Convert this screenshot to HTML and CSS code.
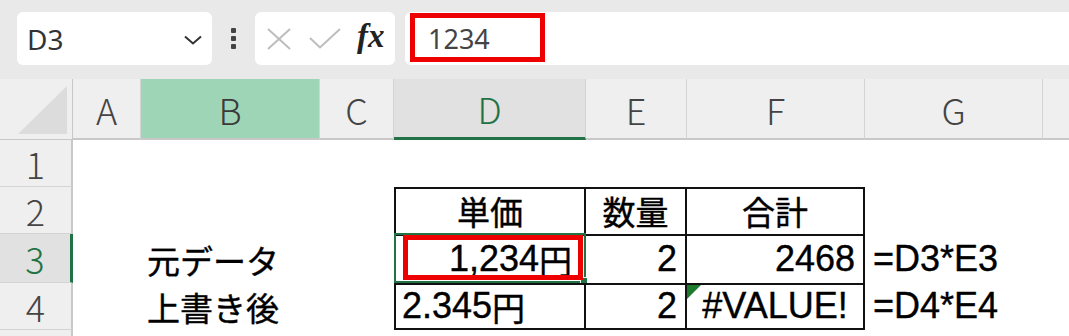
FILE: index.html
```html
<!DOCTYPE html>
<html lang="ja">
<head>
  <meta charset="UTF-8">
  <meta name="viewport" content="width=device-width, initial-scale=1.0">
  <title>Excel - 上書き</title>
  <link rel="stylesheet" href="styles.css">
</head>
<body>
  <div class="toolbar">
    <div class="name-box">
      <span class="name-text">D3</span>
      <svg class="chevron" width="20" height="10" viewBox="0 0 20 10">
        <polyline points="2,1.5 10,8.5 18,1.5" fill="none" stroke="#333" stroke-width="2"/>
      </svg>
    </div>
    <div class="grip"><i></i><i></i><i></i></div>
    <div class="fx-box">
      <svg class="icon-x" width="24" height="22" viewBox="0 0 24 22">
        <line x1="1" y1="1" x2="23" y2="21" stroke="#bdbdbd" stroke-width="2"/>
        <line x1="23" y1="1" x2="1" y2="21" stroke="#bdbdbd" stroke-width="2"/>
      </svg>
      <svg class="icon-check" width="32" height="21" viewBox="0 0 32 21">
        <polyline points="1,10 11,19.5 31,1" fill="none" stroke="#bdbdbd" stroke-width="2"/>
      </svg>
      <span class="fx">fx</span>
    </div>
    <div class="formula">
      <span class="formula-text">1234</span>
      <div class="mark mark-formula"></div>
    </div>
  </div>

  <div class="sheet">
    <!-- column headers -->
    <div class="corner">
      <svg width="49" height="48" viewBox="0 0 49 48"><polygon points="49,0 49,48 0,48" fill="#dcdcdc"/></svg>
    </div>
    <div class="ch">A</div>
    <div class="ch ch-sel">B</div>
    <div class="ch">C</div>
    <div class="ch ch-active">D</div>
    <div class="ch">E</div>
    <div class="ch">F</div>
    <div class="ch">G</div>
    <div class="ch ch-last"></div>

    <!-- row 1 -->
    <div class="rh">1</div>
    <div class="c span-8"></div>

    <!-- row 2 -->
    <div class="rh">2</div>
    <div class="c span-3"></div>
    <div class="c t t-first center"><span class="ja">単価</span></div>
    <div class="c t center"><span class="ja">数量</span></div>
    <div class="c t center"><span class="ja">合計</span></div>
    <div class="c span-2"></div>

    <!-- row 3 -->
    <div class="rh rh-active">3</div>
    <div class="c"></div>
    <div class="c"><span class="ja">元データ</span></div>
    <div class="c"></div>
    <div class="c t t-first right selected">
      1,234<span class="ja">円</span>
      <div class="sel-border"><i class="handle"></i></div>
      <div class="mark mark-cell"></div>
    </div>
    <div class="c t right">2</div>
    <div class="c t right">2468</div>
    <div class="c overflow">=D3*E3</div>
    <div class="c"></div>

    <!-- row 4 -->
    <div class="rh">4</div>
    <div class="c"></div>
    <div class="c"><span class="ja">上書き後</span></div>
    <div class="c"></div>
    <div class="c t t-first t-last">2.345<span class="ja">円</span></div>
    <div class="c t t-last right">2</div>
    <div class="c t t-last center error">#VALUE!<i class="flag"></i></div>
    <div class="c overflow">=D4*E4</div>
    <div class="c"></div>

    <!-- row 5 -->
    <div class="rh rh-cut">5</div>
    <div class="c span-8"></div>
  </div>
</body>
</html>
```

FILE: styles.css
```css
body {
  margin: 0;
  width: 1069px;
  height: 336px;
  overflow: hidden;
  background: #fff;
  font-family: "Liberation Sans", "Noto Sans CJK JP", sans-serif;
}

/* formula bar */
.toolbar {
  display: flex;
  align-items: flex-start;
  height: 79px;
  box-sizing: border-box;
  padding: 12px 0 0 17px;
  background: #e9e9e9;
}
.name-box {
  display: flex;
  align-items: center;
  justify-content: space-between;
  width: 195px;
  height: 53px;
  box-sizing: border-box;
  padding: 0 9px 0 10px;
  background: #fff;
  border-radius: 6px;
}
.name-text {
  font-family: "Noto Sans", "Liberation Sans", sans-serif;
  font-size: 28px;
  color: #333;
}
.chevron {
  margin-top: 2px;
}
.grip {
  display: flex;
  flex-direction: column;
  gap: 3px;
  width: 43px;
  height: 53px;
  align-items: center;
  justify-content: center;
}
.grip i {
  display: block;
  width: 5px;
  height: 5px;
  background: #444;
  border-radius: 1px;
}
.fx-box {
  display: flex;
  align-items: center;
  width: 140px;
  height: 53px;
  box-sizing: border-box;
  padding-left: 12px;
  background: #fff;
  border-radius: 6px;
}
.icon-x {
  margin-right: 18px;
}
.icon-check {
  margin-right: 16px;
}
.fx {
  font-family: "Liberation Serif", serif;
  font-style: italic;
  font-weight: bold;
  font-size: 33px;
  color: #222;
  margin-top: -4px;
}
.formula {
  position: relative;
  flex: 1;
  height: 53px;
  margin-left: 10px;
  background: #fff;
  border-radius: 6px 0 0 6px;
  display: flex;
  align-items: center;
  padding-left: 23px;
}
.formula-text {
  font-family: "Noto Sans", "Liberation Sans", sans-serif;
  font-size: 27px;
  color: #444;
}

/* red annotation boxes */
.mark {
  position: absolute;
  border: 5px solid #ee0000;
  box-sizing: border-box;
}
.mark-formula {
  left: 5px;
  top: 1px;
  width: 135px;
  height: 49px;
}
.mark-cell {
  left: 7px;
  top: -1px;
  right: 1px;
  bottom: 3px;
}

/* sheet grid */
.sheet {
  display: grid;
  grid-template-columns: 73px 68px 179px 74px 192px 101px 178px 178px 1fr;
  grid-template-rows: 61px 47px 47px 49px 47px 47px;
}
.corner {
  display: flex;
  align-items: flex-end;
  justify-content: flex-end;
  padding: 0 5px 5px 0;
  background: #efefef;
  border-right: 1px solid #c8c8c8;
  border-bottom: 1px solid #c8c8c8;
}
.ch {
  display: flex;
  align-items: center;
  justify-content: center;
  background: #efefef;
  border-right: 1px solid #d4d4d4;
  border-bottom: 2px solid #c8c8c8;
  font-family: "Noto Sans CJK JP", "Noto Sans", sans-serif;
  font-weight: 300;
  font-size: 36px;
  color: #444;
}
.ch-sel {
  background: #9fd5b7;
  color: #3a3a3a;
}
.ch-active {
  background: #e1e1e1;
  color: #217346;
  border-bottom: 3px solid #217346;
}
.ch-last {
  border-right: none;
}
.rh {
  display: flex;
  align-items: center;
  justify-content: center;
  background: #efefef;
  border-right: 2px solid #c8c8c8;
  border-bottom: 1px solid #d4d4d4;
  font-family: "Noto Sans CJK JP", "Noto Sans", sans-serif;
  font-weight: 300;
  font-size: 36px;
  color: #444;
}
.rh-active {
  background: #e1e1e1;
  color: #217346;
  border-right: 3px solid #217346;
}
.rh-cut {
  align-items: flex-start;
  padding-top: 0;
}

.c {
  position: relative;
  display: flex;
  align-items: flex-end;
  box-sizing: border-box;
  padding: 0 6px 6px;
  font-size: 36px;
  line-height: 1;
  color: #000;
  white-space: nowrap;
  -webkit-text-stroke: 0.4px #000;
}
.span-8 {
  grid-column: span 8;
}
.span-3 {
  grid-column: span 3;
}
.span-2 {
  grid-column: span 2;
}
.ja {
  font-family: "Noto Sans CJK JP", sans-serif;
  font-size: 33px;
}
.center {
  justify-content: center;
}
.right {
  justify-content: flex-end;
  padding-right: 8px;
}
.selected {
  padding-right: 12px;
}
.overflow {
  overflow: visible;
  padding-left: 8px;
}

/* bordered table D2:F4 */
.t {
  border-top: 2px solid #111;
  border-right: 2px solid #111;
}
.t-first {
  border-left: 2px solid #111;
}
.t-last {
  border-bottom: 2px solid #111;
  padding-bottom: 4px;
}

.sel-border {
  position: absolute;
  left: -2px;
  top: -3px;
  right: -2px;
  bottom: 0;
  border: 2px solid #217346;
}
.handle {
  position: absolute;
  right: -4px;
  bottom: -4px;
  width: 6px;
  height: 6px;
  background: #217346;
  border: 1px solid #fff;
}
.flag {
  position: absolute;
  left: 0;
  top: 0;
  width: 0;
  height: 0;
  border-top: 14px solid #1e7b2e;
  border-right: 14px solid transparent;
}
```
